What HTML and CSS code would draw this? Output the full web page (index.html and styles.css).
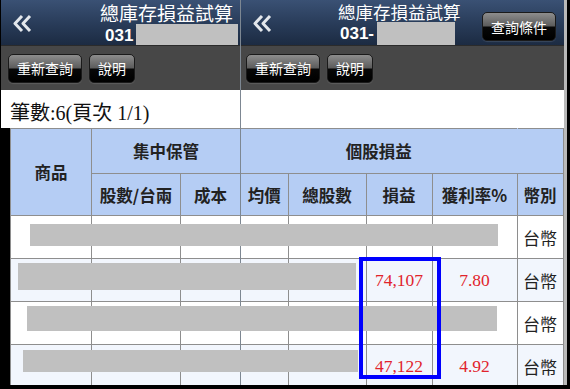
FILE: index.html
```html
<!DOCTYPE html>
<html lang="zh-Hant">
	<head>
		<meta charset="UTF-8" />
		<meta name="viewport" content="width=device-width, initial-scale=1.0" />
		<title>總庫存損益試算</title>
		<link rel="stylesheet" href="styles.css">
	</head>
	<body>
		<div class="frame">
			<!-- left screen: first columns -->
			<div class="panel panel-left">
				<div class="titlebar">
					<span class="back">
						<svg width="20" height="19" viewBox="0 0 20 19"><path d="M9 2 L2 9.5 L9 17 M17 2 L10 9.5 L17 17" fill="none" stroke="#e3e7ec" stroke-width="3" stroke-linejoin="round"/></svg>
					</span>
					<div class="title title-left">
						<div class="title-main">總庫存損益試算</div>
						<div class="title-sub">031<span class="mask mask-left"></span></div>
					</div>
				</div>
				<div class="toolbar">
					<button class="btn">重新查詢</button>
					<button class="btn">說明</button>
				</div>
				<div class="content">
					<div class="count">筆數:6(頁次 1/1)</div>
					<div class="table-wrap">
						<table class="grid grid-left">
							<colgroup>
								<col class="c-item" />
								<col class="c-shares" />
								<col class="c-cost" />
							</colgroup>
							<tr class="hd1">
								<th rowspan="2">商品</th>
								<th colspan="2">集中保管</th>
							</tr>
							<tr class="hd2">
								<th>股數/台兩</th>
								<th>成本</th>
							</tr>
							<tr><td></td><td></td><td></td></tr>
							<tr class="alt"><td></td><td></td><td></td></tr>
							<tr><td></td><td></td><td></td></tr>
							<tr class="alt"><td></td><td></td><td></td></tr>
						</table>
					</div>
				</div>
			</div>

			<!-- right screen: scrolled to the profit columns -->
			<div class="panel panel-right">
				<div class="titlebar">
					<span class="back">
						<svg width="20" height="19" viewBox="0 0 20 19"><path d="M9 2 L2 9.5 L9 17 M17 2 L10 9.5 L17 17" fill="none" stroke="#e3e7ec" stroke-width="3" stroke-linejoin="round"/></svg>
					</span>
					<div class="title title-right">
						<div class="title-main">總庫存損益試算</div>
						<div class="title-sub">031-<span class="mask mask-right"></span></div>
					</div>
					<button class="btn btn-query">查詢條件</button>
				</div>
				<div class="toolbar">
					<button class="btn">重新查詢</button>
					<button class="btn">說明</button>
				</div>
				<div class="content content-right">
					<table class="grid grid-right">
						<colgroup>
							<col class="c-avg" />
							<col class="c-total" />
							<col class="c-pl" />
							<col class="c-rate" />
							<col class="c-cur" />
						</colgroup>
						<tr class="hd1">
							<th colspan="4" class="hd-group">個股損益</th>
							<th class="hd-blank"></th>
						</tr>
						<tr class="hd2">
							<th>均價</th>
							<th>總股數</th>
							<th>損益</th>
							<th>獲利率%</th>
							<th>幣別</th>
						</tr>
						<tr><td></td><td></td><td></td><td></td><td class="cur">台幣</td></tr>
						<tr class="alt"><td></td><td></td><td class="num">74,107</td><td class="num">7.80</td><td class="cur">台幣</td></tr>
						<tr><td></td><td></td><td></td><td></td><td class="cur">台幣</td></tr>
						<tr class="alt"><td></td><td></td><td class="num">47,122</td><td class="num">4.92</td><td class="cur">台幣</td></tr>
					</table>
				</div>
			</div>
			<div class="edge"></div>

			<!-- redactions and highlight drawn over both screens -->
			<div class="redact r1"></div>
			<div class="redact r2"></div>
			<div class="redact r3"></div>
			<div class="redact r4"></div>
			<div class="highlight"></div>
		</div>
	</body>
</html>
```

FILE: styles.css
```css
:root {
	--bar-top: #3a5174;
	--bar-bottom: #1c2b42;
	--toolbar-bg: #474747;
	--head-bg: #b5cdf4;
	--alt-bg: #f2f6fd;
	--line: #8e8e8e;
	--mask: #c0c0c0;
	--red: #e1232c;
}
body {
	margin: 0;
	padding: 0;
	background: #000;
	font-family: "Liberation Sans", "Noto Sans CJK TC", sans-serif;
}
.frame {
	position: relative;
	display: flex;
	width: 570px;
	height: 389px;
	background: #000;
	overflow: hidden;
}
.panel {
	display: flex;
	flex-direction: column;
	height: 385px;
	overflow: hidden;
}
.panel-left {
	width: 240px;
	padding-left: 1px;
	box-sizing: border-box;
}
.panel-right {
	width: 324px;
	border-left: 1px solid #7d8792;
	box-sizing: border-box;
}
.edge {
	width: 3px;
	height: 385px;
	background: #b9b9b9;
}

/* title bar */
.titlebar {
	display: flex;
	align-items: flex-start;
	height: 45px;
	flex-shrink: 0;
	background: linear-gradient(var(--bar-top), #283b58 55%, var(--bar-bottom));
	color: #fff;
	overflow: hidden;
}
.back {
	display: block;
	margin: 14px 0 0 12px;
	width: 20px;
	height: 19px;
}
.title-left {
	margin: 0 0 0 67px;
}
.title-right {
	margin: 0 0 0 65px;
}
.title-main {
	font-family: "Noto Sans CJK TC", sans-serif;
	font-size: 19px;
	line-height: 26px;
	white-space: nowrap;
}
.title-right .title-main {
	font-size: 17.5px;
	line-height: 24px;
}
.title-sub {
	display: flex;
	align-items: flex-start;
	padding-left: 5px;
	font-size: 17px;
	font-weight: bold;
	line-height: 19px;
}
.title-right .title-sub {
	padding-left: 2px;
}
.mask {
	display: block;
	background: var(--mask);
}
.mask-left {
	width: 102px;
	height: 23px;
	margin: -2px 0 0 3px;
}
.mask-right {
	width: 78px;
	height: 23px;
	margin: -2px 0 0 3px;
}

/* toolbar + buttons */
.toolbar {
	display: flex;
	gap: 7px;
	align-items: center;
	height: 45px;
	flex-shrink: 0;
	padding-left: 7px;
	background: var(--toolbar-bg);
	border-top: 1px solid #2b2b2b;
	box-sizing: border-box;
}
.panel-right .toolbar {
	padding-left: 5px;
}
.btn {
	height: 29px;
	padding: 0 8px;
	border: 1px solid #1a1a1a;
	border-radius: 5px;
	background: linear-gradient(#8d8d8d, #5c5c5c 48%, #070707 52%, #000);
	color: #fff;
	font-family: "Noto Sans CJK TC", sans-serif;
	font-size: 14px;
	line-height: 1;
	box-shadow: 0 1px 1px rgba(255, 255, 255, 0.12);
	cursor: pointer;
}
.btn-query {
	margin: 12px 8px 0 auto;
	width: 74px;
	padding: 0;
}

/* content */
.content {
	flex-grow: 1;
	background: #fff;
}
.count {
	height: 38px;
	padding: 10px 0 0 9px;
	box-sizing: border-box;
	font-family: "Liberation Serif", "Noto Sans CJK TC", serif;
	font-size: 20px;
	line-height: 26px;
	color: #111;
	white-space: nowrap;
	overflow: hidden;
}
.table-wrap {
	background: #000;
	padding-left: 9px;
	height: 260px;
}
.content-right {
	padding-top: 38px;
}
.grid {
	border-collapse: collapse;
	table-layout: fixed;
	background: #fff;
}
.grid-left {
	width: 230px;
}
.grid-right {
	width: 322px;
}
.c-item { width: 81px; }
.c-shares { width: 89px; }
.c-cost { width: 60px; }
.c-avg { width: 47px; }
.c-total { width: 78px; }
.c-pl { width: 66px; }
.c-rate { width: 85px; }
.c-cur { width: 46px; }

.grid th,
.grid td {
	border: 1px solid var(--line);
	padding: 0;
	text-align: center;
	vertical-align: middle;
}
.grid th {
	background: var(--head-bg);
	font-family: "Noto Sans CJK TC", sans-serif;
	font-size: 16.5px;
	font-weight: bold;
	color: #222;
}
.grid-right .hd-group {
	border-right-color: var(--head-bg);
}
.grid-right .hd-blank {
	border-left-color: var(--head-bg);
}
.grid-right th:first-child,
.grid-right td:first-child {
	border-left: none;
}
.grid tr { height: 43px; }
.grid tr.hd1 { height: 45px; }
.grid tr.hd2 { height: 42px; }
.grid tr.alt td {
	background: var(--alt-bg);
}
.num {
	font-family: "Liberation Serif", serif;
	font-size: 17.5px;
	color: var(--red);
}
.cur {
	font-family: "Noto Sans CJK TC", sans-serif;
	font-size: 17px;
	color: #222;
}

/* overlays */
.redact {
	position: absolute;
	background: var(--mask);
}
.r1 { left: 30px; top: 224px; width: 468px; height: 22px; }
.r2 { left: 18px; top: 263px; width: 338px; height: 27px; }
.r3 { left: 27px; top: 306px; width: 470px; height: 25px; }
.r4 { left: 23px; top: 350px; width: 335px; height: 22px; }
.highlight {
	position: absolute;
	left: 359px;
	top: 257px;
	width: 82px;
	height: 122px;
	border: 4px solid #0000ff;
	box-sizing: border-box;
}
```
